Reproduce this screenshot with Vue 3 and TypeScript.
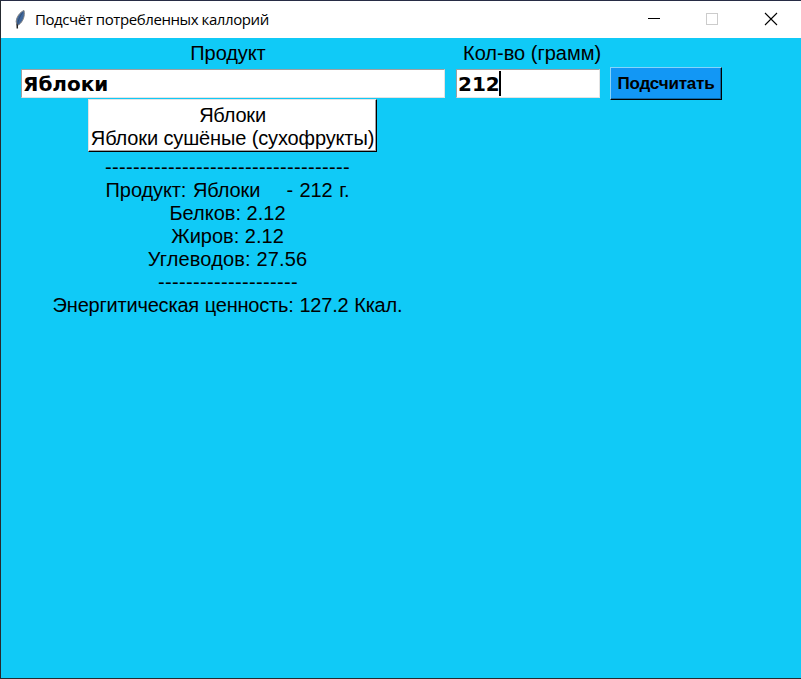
<script setup lang="ts">
import { ref } from 'vue'

interface Line {
  text: string
  kind: string
}

const product = ref<string>('Яблоки')
const grams = ref<string>('212')

const suggestions: Line[] = [
  { text: 'Яблоки', kind: 'short' },
  { text: 'Яблоки сушёные (сухофрукты)', kind: 'long' },
]

const report: Line[] = [
  { text: '-'.repeat(35), kind: 'dashes' },
  { text: 'Продукт: Яблоки    - 212 г.', kind: 'name' },
  { text: 'Белков: 2.12', kind: 'protein' },
  { text: 'Жиров: 2.12', kind: 'fat' },
  { text: 'Углеводов: 27.56', kind: 'carbs' },
  { text: '-'.repeat(20), kind: 'dashes divider' },
  { text: 'Энергитическая ценность: 127.2 Ккал.', kind: 'energy' },
]
</script>

<template>
  <div class="window">
    <header class="titlebar">
      <svg class="feather" width="16" height="22" viewBox="0 0 16 22">
        <path d="M11 1.5 C7 3 3.4 8 3.2 12.5 L3.8 16 L5.8 15.8 C10 12.5 12.2 7 11 1.5Z" fill="#3f679c" stroke="#808080" stroke-width="1" />
        <path d="M9.6 3.5 C7 7 5 11 4.4 17" fill="none" stroke="#2f4566" stroke-width="0.8" />
        <path d="M4.2 15.5 L4.3 19.5" stroke="#222" stroke-width="1.5" />
      </svg>
      <span class="title">Подсчёт потребленных каллорий</span>
      <div class="controls">
        <svg width="46" height="37" viewBox="0 0 46 37" shape-rendering="crispEdges"><path d="M17 17.5H29" stroke="#000" /></svg>
        <svg width="58" height="37" viewBox="0 0 58 37" shape-rendering="crispEdges"><rect x="29.5" y="12.5" width="11" height="11" fill="none" stroke="#ccc" /></svg>
        <svg width="66" height="37" viewBox="0 0 66 37"><path d="M30 12L42 24M42 12L30 24" stroke="#000" stroke-width="1.1" /></svg>
      </div>
    </header>
    <main class="body">
      <div class="form">
        <span class="label label-product">Продукт</span>
        <span class="label label-grams">Кол-во (грамм)</span>
        <div class="entry entry-product"><span>{{ product }}</span></div>
        <div class="entry entry-grams"><span>{{ grams }}</span><i class="caret"></i></div>
        <button class="submit" type="button"><span>Подсчитать</span></button>
      </div>
      <div class="results">
        <div class="suggestions">
          <div v-for="(s, i) in suggestions" :key="i" class="line"><span :class="s.kind">{{ s.text }}</span></div>
        </div>
        <div class="report">
          <div v-for="(r, i) in report" :key="i" class="line"><span :class="r.kind">{{ r.text }}</span></div>
        </div>
      </div>
    </main>
  </div>
</template>

<style>
body {
  margin: 0;
  overflow: hidden;
}
</style>

<style scoped>
.window {
  box-sizing: border-box;
  width: 801px;
  height: 679px;
  border: 1px solid #252a30;
  border-top-color: #272c45;
  border-right: 0;
  background: #10caf7;
  color: #000;
  font-family: "Liberation Sans", sans-serif;
}
.titlebar {
  display: flex;
  align-items: center;
  height: 37px;
  background: #fff;
}
.feather {
  margin-left: 12px;
  flex: none;
}
.title {
  margin: -2px 0 0 6px;
  font: 15px/20px "Open Sans", sans-serif;
  letter-spacing: -0.42px;
  white-space: nowrap;
}
.controls {
  display: flex;
  margin-left: auto;
}
.form {
  display: grid;
  grid-template-columns: 424px 145px 112px;
  grid-template-rows: 25px 33px;
  column-gap: 10px;
  align-items: center;
  padding: 4px 0 0 20px;
}
.label {
  justify-self: center;
  font-size: 20px;
  line-height: 23px;
  align-self: start;
  white-space: nowrap;
}
.label-product {
  position: relative;
  left: -5px;
  letter-spacing: -0.1px;
}
.label-grams {
  grid-column: 2 / 4;
  justify-self: start;
  margin-left: 8px;
}
.entry {
  box-sizing: border-box;
  display: flex;
  align-items: center;
  height: 29px;
  padding-left: 1px;
  border: 1px solid #e3e3e3;
  border-top-color: #a0a0a0;
  border-left-color: #a0a0a0;
  background: #fff;
  font: bold 20px/25px "DejaVu Sans", sans-serif;
}
.entry span {
  padding-top: 2px;
}
.entry-product {
  grid-column: 1;
}
.entry-grams {
  margin-left: 1px;
}
.caret {
  width: 2px;
  height: 25px;
  margin-left: -1px;
  background: #000;
}
.submit {
  box-sizing: border-box;
  height: 33px;
  padding: 0;
  border: 1px solid #000;
  border-top-color: #86d4fb;
  border-left-color: #86d4fb;
  border-radius: 0;
  background: #1297f5;
  box-shadow: inset -1px -1px #0b67a8;
  color: #000;
  font: bold 17px/20px "Liberation Sans", sans-serif;
  letter-spacing: -0.18px;
  white-space: nowrap;
}
.results {
  display: flex;
  flex-direction: column;
  align-items: flex-start;
}
.line {
  display: flex;
  justify-content: center;
  height: 23px;
  font-size: 20px;
  line-height: 23px;
  white-space: pre;
}
.suggestions {
  box-sizing: border-box;
  width: 289px;
  height: 53px;
  margin: -1px 0 0 87px;
  padding-top: 4px;
  border: 1px solid #000;
  border-top-color: #e3e3e3;
  border-left-color: #e3e3e3;
  background: #fff;
  box-shadow: inset -1px -1px #a0a0a0;
}
.report {
  width: 353px;
  margin: 4px 0 0 50px;
}
.dashes {
  letter-spacing: 0.34px;
}
.divider {
  padding-left: 1px;
}
.short {
  letter-spacing: -0.2px;
}
.long {
  letter-spacing: -0.13px;
}
.name {
  letter-spacing: -0.1px;
  word-spacing: 1.1px;
}
.carbs {
  letter-spacing: 0.15px;
}
.energy {
  letter-spacing: -0.2px;
  word-spacing: 0.4px;
}
</style>
